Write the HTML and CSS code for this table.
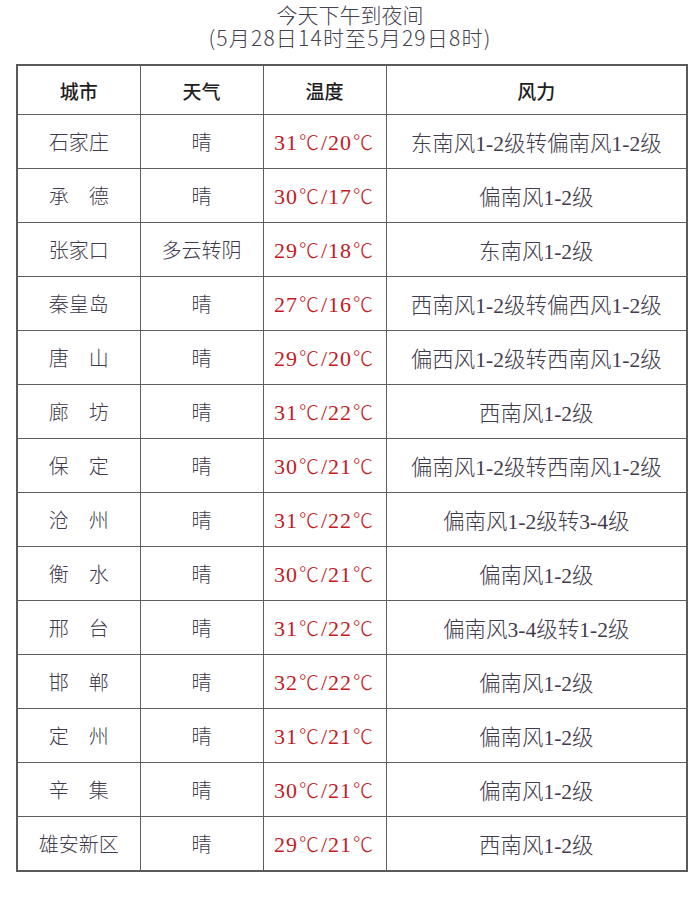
FILE: index.html
```html
<!DOCTYPE html>
<html lang="zh-CN">
<head>
<meta charset="utf-8">
<title>今天下午到夜间</title>
<link rel="stylesheet" href="styles.css">
</head>
<body>
<div class="page">
  <div class="title">
    <div class="l1">今天下午到夜间</div>
    <div class="l2">(5月28日14时至5月29日8时)</div>
  </div>
  <table class="wx">
    <colgroup><col class="c1"><col class="c2"><col class="c3"><col class="c4"></colgroup>
    <thead>
      <tr><th>城市</th><th>天气</th><th>温度</th><th>风力</th></tr>
    </thead>
    <tbody>
      <tr><td>石家庄</td><td>晴</td><td class="t">31<i>℃</i>/20<i>℃</i></td><td>东南风1-2级转偏南风1-2级</td></tr>
      <tr><td>承　德</td><td>晴</td><td class="t">30<i>℃</i>/17<i>℃</i></td><td>偏南风1-2级</td></tr>
      <tr><td>张家口</td><td>多云转阴</td><td class="t">29<i>℃</i>/18<i>℃</i></td><td>东南风1-2级</td></tr>
      <tr><td>秦皇岛</td><td>晴</td><td class="t">27<i>℃</i>/16<i>℃</i></td><td>西南风1-2级转偏西风1-2级</td></tr>
      <tr><td>唐　山</td><td>晴</td><td class="t">29<i>℃</i>/20<i>℃</i></td><td>偏西风1-2级转西南风1-2级</td></tr>
      <tr><td>廊　坊</td><td>晴</td><td class="t">31<i>℃</i>/22<i>℃</i></td><td>西南风1-2级</td></tr>
      <tr><td>保　定</td><td>晴</td><td class="t">30<i>℃</i>/21<i>℃</i></td><td>偏南风1-2级转西南风1-2级</td></tr>
      <tr><td>沧　州</td><td>晴</td><td class="t">31<i>℃</i>/22<i>℃</i></td><td>偏南风1-2级转3-4级</td></tr>
      <tr><td>衡　水</td><td>晴</td><td class="t">30<i>℃</i>/21<i>℃</i></td><td>偏南风1-2级</td></tr>
      <tr><td>邢　台</td><td>晴</td><td class="t">31<i>℃</i>/22<i>℃</i></td><td>偏南风3-4级转1-2级</td></tr>
      <tr><td>邯　郸</td><td>晴</td><td class="t">32<i>℃</i>/22<i>℃</i></td><td>偏南风1-2级</td></tr>
      <tr><td>定　州</td><td>晴</td><td class="t">31<i>℃</i>/21<i>℃</i></td><td>偏南风1-2级</td></tr>
      <tr><td>辛　集</td><td>晴</td><td class="t">30<i>℃</i>/21<i>℃</i></td><td>偏南风1-2级</td></tr>
      <tr><td>雄安新区</td><td>晴</td><td class="t">29<i>℃</i>/21<i>℃</i></td><td>西南风1-2级</td></tr>
    </tbody>
  </table>
</div>
</body>
</html>
```
FILE: styles.css
```css
html, body {
  margin: 0;
  padding: 0;
  background: #ffffff;
}
.page {
  width: 700px;
  height: 905px;
  padding-top: 3px;
  box-sizing: border-box;
  font-family: "Liberation Serif", "Noto Sans CJK SC", serif;
  color: #3f3b4c;
}
.title {
  text-align: center;
  font-family: "Noto Sans CJK SC", sans-serif;
  font-weight: 300;
  color: #46434f;
  height: 61px;
}
.title .l1 {
  font-size: 21px;
  line-height: 23px;
  height: 23px;
}
.title .l2 {
  font-size: 21px;
  line-height: 23px;
  height: 23px;
  letter-spacing: 1.2px;
}
.wx {
  margin-left: 16px;
  width: 670px;
  border-collapse: collapse;
  table-layout: fixed;
  border: 2px solid #5a5a5a;
}
.c1, .c2, .c3 { width: 123px; }
.c4 { width: 301px; }
.wx th, .wx td {
  border: 1.5px solid #5e5e5e;
  text-align: center;
  padding: 0;
  white-space: nowrap;
}
.wx th {
  height: 48px;
  font-family: "Noto Sans CJK SC", sans-serif;
  font-weight: 500;
  font-size: 19px;
  color: #1e1e22;
}
.wx td {
  height: 53px;
  font-size: 21.5px;
  font-family: "Liberation Serif", "Noto Sans CJK SC", serif;
  font-weight: 300;
}
.wx td:first-child, .wx td:nth-child(2) {
  font-family: "Noto Sans CJK SC", sans-serif;
  font-weight: 300;
  font-size: 20px;
}
.wx td.t {
  color: #c41a1f;
  font-size: 22px;
  letter-spacing: 1px;
}
.wx td.t i {
  font-style: normal;
  font-family: "Noto Sans CJK SC", sans-serif;
  font-weight: 300;
  font-size: 20px;
  padding: 0 1px;
}
```
